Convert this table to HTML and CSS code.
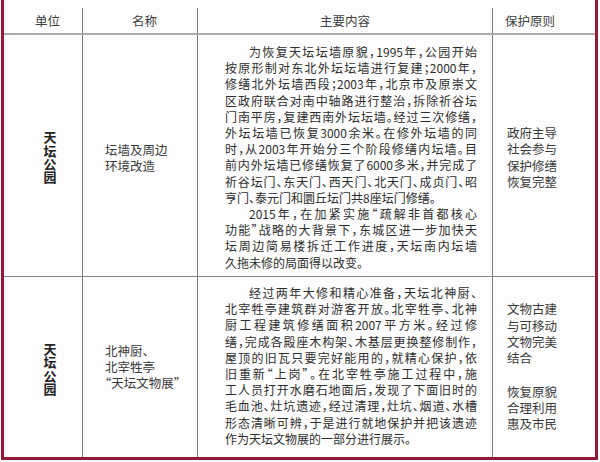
FILE: index.html
```html
<!DOCTYPE html>
<html lang="zh-CN">
<head>
<meta charset="utf-8">
<title>天坛公园</title>
<link rel="stylesheet" href="styles.css">
</head>
<body>
<div class="table">
  <div class="head">
    <div class="hc h1">单位</div>
    <div class="hc h2">名称</div>
    <div class="hc h3">主要内容</div>
    <div class="hc h4">保护原则</div>
  </div>
  <div class="row r1">
    <div class="cell unit"><span>天</span><span>坛</span><span>公</span><span>园</span></div>
    <div class="cell name n1"><span>坛墙及周边</span><span>环境改造</span></div>
    <div class="cell content c1">
      <p class="para">
        <span class="ln ind">为恢复天坛坛墙原貌，1995年，公园开始</span>
        <span class="ln">按原形制对东北外坛坛墙进行复建；2000年，</span>
        <span class="ln">修缮北外坛墙西段；2003年，北京市及原崇文</span>
        <span class="ln">区政府联合对南中轴路进行整治，拆除祈谷坛</span>
        <span class="ln">门南平房，复建西南外坛坛墙。经过三次修缮，</span>
        <span class="ln">外坛坛墙已恢复3000余米。在修外坛墙的同</span>
        <span class="ln">时，从2003年开始分三个阶段修缮内坛墙。目</span>
        <span class="ln">前内外坛墙已修缮恢复了6000多米，并完成了</span>
        <span class="ln">祈谷坛门、东天门、西天门、北天门、成贞门、昭</span>
        <span class="ln last">亨门、泰元门和圜丘坛门共8座坛门修缮。</span>
      </p>
      <p class="para">
        <span class="ln ind">2015年，在加紧实施“疏解非首都核心</span>
        <span class="ln">功能”战略的大背景下，东城区进一步加快天</span>
        <span class="ln">坛周边简易楼拆迁工作进度，天坛南内坛墙</span>
        <span class="ln last">久拖未修的局面得以改变。</span>
      </p>
    </div>
    <div class="cell rule ru1">
      <span>政府主导</span><span>社会参与</span><span>保护修缮</span><span>恢复完整</span>
    </div>
  </div>
  <div class="row r2">
    <div class="cell unit"><span>天</span><span>坛</span><span>公</span><span>园</span></div>
    <div class="cell name n2"><span>北神厨、</span><span>北宰牲亭</span><span>“天坛文物展”</span></div>
    <div class="cell content c2">
      <p class="para">
        <span class="ln ind">经过两年大修和精心准备，天坛北神厨、</span>
        <span class="ln">北宰牲亭建筑群对游客开放。北宰牲亭、北神</span>
        <span class="ln">厨工程建筑修缮面积2007平方米。经过修</span>
        <span class="ln">缮，完成各殿座木构架、木基层更换整修制作，</span>
        <span class="ln">屋顶的旧瓦只要完好能用的，就精心保护，依</span>
        <span class="ln">旧重新“上岗”。在北宰牲亭施工过程中，施</span>
        <span class="ln">工人员打开水磨石地面后，发现了下面旧时的</span>
        <span class="ln">毛血池、灶坑遗迹，经过清理，灶坑、烟道、水槽</span>
        <span class="ln">形态清晰可辨，于是进行就地保护并把该遗迹</span>
        <span class="ln last">作为天坛文物展的一部分进行展示。</span>
      </p>
    </div>
    <div class="cell rule ru2">
      <span>文物古建</span><span>与可移动</span><span>文物完美</span><span>结合</span>
      <span class="gap"></span>
      <span>恢复原貌</span><span>合理利用</span><span>惠及市民</span>
    </div>
  </div>
</div>
</body>
</html>
```

FILE: styles.css
```css
html, body {
  margin: 0;
  padding: 0;
  background: #ffffff;
}

body {
  font-family: "Noto Sans CJK SC", "Noto Sans", sans-serif;
  color: #333333;
}

.table {
  margin-left: 1px;
  width: 591px;
  border: 3px solid #8d1c34;
  border-top: none;
  background: #fdfdfd;
}

.head,
.row {
  display: grid;
  grid-template-columns: 79px 115px 295px 102px;
}

.head {
  height: 33px;
  border-bottom: 2px solid #ababab;
}

.hc {
  margin-top: 8px;
  height: 25px;
  line-height: 25px;
  font-size: 12.5px;
  color: #404040;
  border-right: 1px solid #7a7a7a;
}

.h1 {
  text-align: center;
  padding-left: 9px;
}

.h2 {
  text-align: center;
  padding-left: 9px;
}

.h3 {
  text-align: center;
}

.h4 {
  border-right: none;
  padding-left: 12px;
}

.r1 {
  height: 241px;
  border-bottom: 1px solid #848484;
}

.r2 {
  height: 180px;
}

.cell {
  border-right: 1px solid #7a7a7a;
  box-sizing: border-box;
}

.cell.rule {
  border-right: none;
}

.unit {
  display: flex;
  flex-direction: column;
  align-items: center;
  justify-content: center;
  padding-left: 14px;
  padding-top: 3px;
  font-weight: bold;
  font-size: 13px;
  line-height: 13.4px;
  color: #222222;
}

.name {
  display: flex;
  flex-direction: column;
  justify-content: center;
  padding-left: 22px;
  font-size: 12.5px;
  line-height: 15.8px;
  color: #3a3a3a;
  font-feature-settings: "halt";
}

.n1 {
  padding-top: 4px;
}

.content {
  padding-left: 27px;
  padding-right: 15px;
  font-size: 12px;
  line-height: 16.2px;
  color: #2e2e2e;
  font-feature-settings: "halt";
}

.c1 {
  padding-top: 9px;
}

.c2 {
  padding-top: 8px;
}

.para {
  margin: 0;
}

.ln {
  display: block;
  text-align: justify;
  text-align-last: justify;
}

.ln.last {
  text-align-last: left;
}

.ln.ind {
  padding-left: 2em;
}

.rule {
  display: flex;
  flex-direction: column;
  justify-content: center;
  padding-left: 14px;
  font-size: 12.5px;
  line-height: 16.3px;
  color: #3a3a3a;
}

.ru1 {
  padding-top: 4px;
}

.gap {
  height: 17px;
}
```
